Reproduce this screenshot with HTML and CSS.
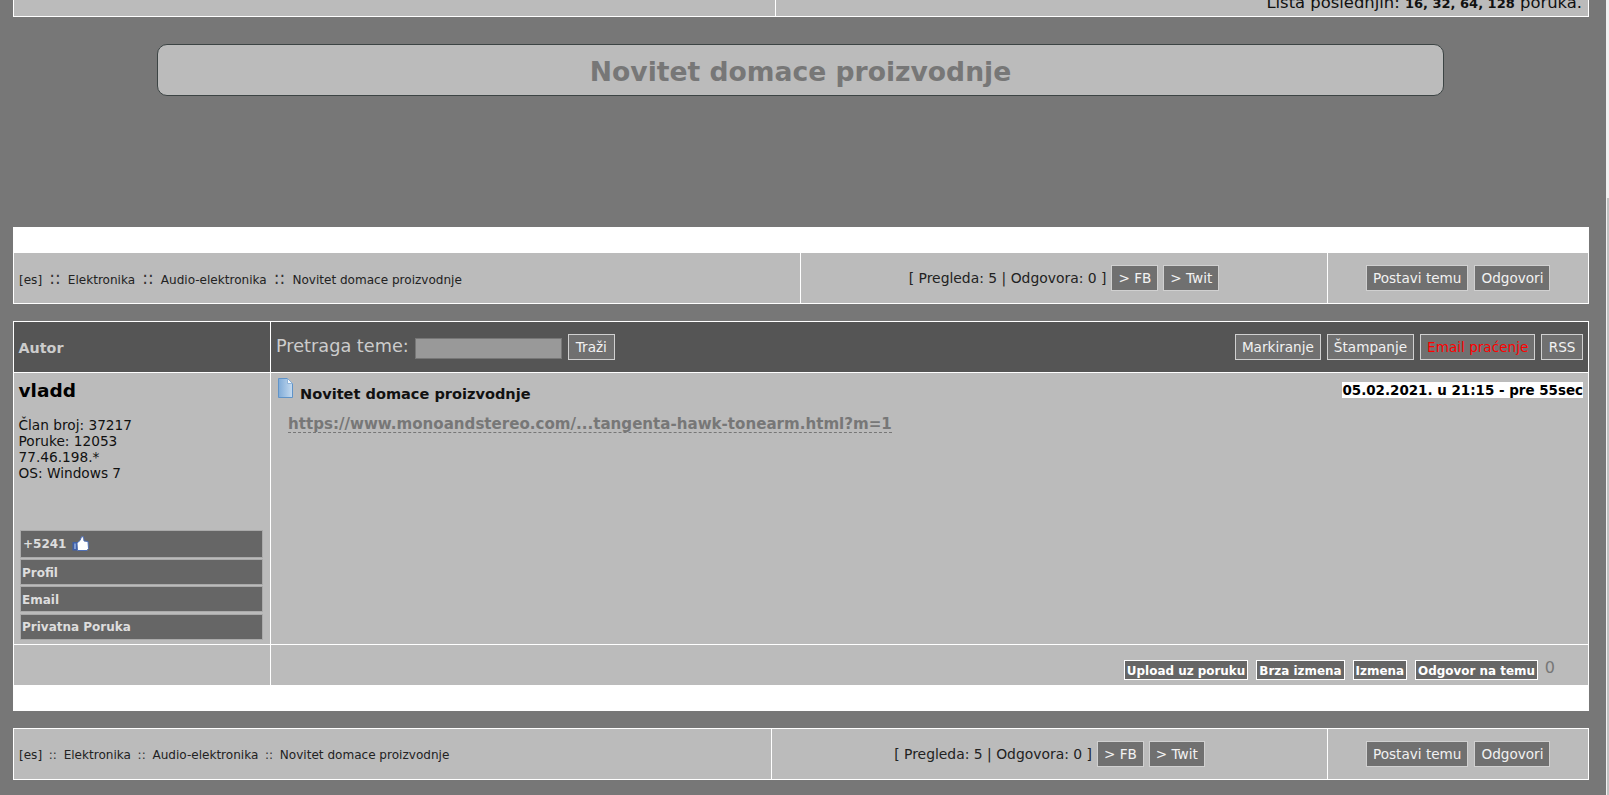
FILE: index.html
```html
<!DOCTYPE html>
<html lang="sr">
<head>
<meta charset="utf-8">
<title>Novitet domace proizvodnje</title>
<link rel="stylesheet" href="styles.css">
</head>
<body>
<div class="page">
  <div class="top-row">
    <div class="top-cell"></div>
    <div class="top-cell top-cell-right"><span>Lista poslednjih: <b class="mini">16, 32, 64, 128</b> poruka.</span></div>
  </div>

  <h1 class="title-box">Novitet domace proizvodnje</h1>

  <div class="band"></div>
  <div class="nav nav-first">
    <div class="nav-cell crumbs crumbs-big-sep">[es] <i>::</i> Elektronika <i>::</i> Audio-elektronika <i>::</i> Novitet domace proizvodnje</div>
    <div class="nav-cell nav-mid">
      <span class="stats">[ Pregleda: 5 | Odgovora: 0 ]</span>
      <a class="btn">&gt; FB</a><a class="btn">&gt; Twit</a>
    </div>
    <div class="nav-cell nav-actions"><a class="btn">Postavi temu</a><a class="btn">Odgovori</a></div>
  </div>

  <div class="thread">
    <div class="head-author">Autor</div>
    <div class="head-main">
      <span class="search-label">Pretraga teme:</span>
      <span class="search-input"></span>
      <a class="btn btn-search">Traži</a>
      <div class="head-tools">
        <a class="btn">Markiranje</a><a class="btn">Štampanje</a><a class="btn btn-red">Email praćenje</a><a class="btn btn-rss">RSS</a>
      </div>
    </div>

    <div class="author">
      <div class="author-name">vladd</div>
      <div class="author-info">Član broj: 37217<br>Poruke: 12053<br>77.46.198.*<br>OS: Windows 7</div>
      <div class="author-links">
        <a class="side-btn side-rep">+5241
          <svg class="thumb" width="17" height="15" viewBox="0 0 17 15"><path d="M0.5 6 H5 V14.5 H0.5 Z" fill="#3f5fa8"/><path d="M5 7 L8 4.5 L9.5 0.8 L11.5 0.8 L12 5 L16 5.5 L16.5 12.5 L15 14.5 L5.5 14.5 Z" fill="#fff" stroke="#4f6fb5" stroke-width="1"/><path d="M2 7.5 H4 V13 H2 Z" fill="#7f9bd0"/></svg>
        </a>
        <a class="side-btn side-text">Profil</a>
        <a class="side-btn side-text">Email</a>
        <a class="side-btn side-last">Privatna Poruka</a>
      </div>
    </div>

    <div class="post">
      <div class="post-head">
        <svg class="doc" width="15" height="20" viewBox="0 0 15 20"><defs><linearGradient id="docfill" x1="0" y1="0" x2="1" y2="0"><stop offset="0" stop-color="#7fabd8"/><stop offset="1" stop-color="#c6dbf0"/></linearGradient></defs><path d="M0.5 0.5 H9.5 L14.5 5.5 V19.5 H0.5 Z" fill="url(#docfill)" stroke="#5f93c8"/><path d="M9.5 0.5 V5.5 H14.5 Z" fill="#f2f7fc" stroke="#7fa8d2" stroke-width="0.8"/></svg>
        <span class="post-title">Novitet domace proizvodnje</span>
        <span class="post-date">05.02.2021. u 21:15 - pre 55sec</span>
      </div>
      <a class="post-link">https://www.monoandstereo.com/...tangenta-hawk-tonearm.html?m=1</a>
    </div>

    <div class="foot-left"></div>
    <div class="foot-main">
      <a class="act">Upload uz poruku</a><a class="act">Brza izmena</a><a class="act">Izmena</a><a class="act">Odgovor na temu</a><span class="count">0</span>
    </div>
  </div>

  <div class="band"></div>

  <div class="nav nav-last">
    <div class="nav-cell crumbs crumbs-small-sep">[es] <i>::</i> Elektronika <i>::</i> Audio-elektronika <i>::</i> Novitet domace proizvodnje</div>
    <div class="nav-cell nav-mid">
      <span class="stats">[ Pregleda: 5 | Odgovora: 0 ]</span>
      <a class="btn">&gt; FB</a><a class="btn">&gt; Twit</a>
    </div>
    <div class="nav-cell nav-actions"><a class="btn">Postavi temu</a><a class="btn">Odgovori</a></div>
  </div>
</div>
<div class="scroll-track"><div class="scroll-thumb"></div></div>
</body>
</html>
```

FILE: styles.css
```css
* { box-sizing: border-box; }
html, body { margin: 0; height: 795px; overflow: hidden; }
body {
  background: #777;
  color: #000;
  font-family: "DejaVu Sans", Verdana, sans-serif;
  font-size: 13px;
}
.page { padding: 0 20px 0 13px; height: 795px; overflow: hidden; }

.top-row {
  display: grid;
  grid-template-columns: 761px 1fr;
  height: 17px;
  background: #fff;
  padding: 0 1px 1px 1px;
  gap: 1px;
}
.top-cell { background: #bbb; overflow: hidden; display: flex; justify-content: flex-end; align-items: flex-end; }
.top-cell-right { padding-right: 6px; font-size: 16.4px; line-height: 16px; color: #111; }
.top-cell-right span { margin-bottom: 4px; white-space: nowrap; }
.mini { font-size: 13px; }

.title-box {
  margin: 27px 145px 131px 144px;
  height: 52px;
  background: #bbb;
  border: 1px solid #3c4444;
  border-radius: 10px;
  color: #777;
  font-size: 26.6px;
  line-height: 54px;
  font-weight: bold;
  text-align: center;
}

.band { height: 26px; background: #fff; }

.nav {
  display: grid;
  background: #fff;
  padding: 0 1px 1px 1px;
  gap: 1px;
}
.nav-first { grid-template-columns: 786px 526px 1fr; grid-template-rows: 50px; height: 51px; }
.nav-last { grid-template-columns: 757px 555px 1fr; grid-template-rows: 50px; padding-top: 1px; height: 52px; margin-top: 17px; }
.nav-cell { background: #bbb; display: flex; align-items: center; }
.crumbs { display: block; padding: 0 0 0 5px; font-size: 12.05px; color: #222; white-space: pre-wrap; }
.crumbs i { font-style: normal; line-height: 1; color: #333; }
.crumbs-big-sep { padding-top: 5px; line-height: 45px; }
.crumbs-big-sep i { font-size: 17px; margin: 0 3.3px; }
.crumbs-small-sep { padding-top: 2px; line-height: 48px; }
.crumbs-small-sep i { font-size: 12px; margin: 0 2.9px; }
.nav-mid { justify-content: center; gap: 5px; }
.stats { font-size: 13.9px; color: #222; white-space: nowrap; }
.nav-actions { padding-left: 38px; gap: 6px; }

.btn {
  display: inline-flex;
  align-items: center;
  height: 26px;
  padding: 0 6px;
  background: #707070;
  border: 1px solid #d0d0d0;
  color: #f2f2f2;
  font-size: 13.6px;
  white-space: nowrap;
}
.btn-red { color: #f00; }
.btn-rss { padding: 0 6.5px; }

.thread {
  margin-top: 17px;
  display: grid;
  grid-template-columns: 256px 1fr;
  grid-template-rows: 50px 271px 40px;
  gap: 1px;
  padding: 1px 1px 0 1px;
  background: #fff;
  height: 364px;
}
.head-author {
  background: #555;
  color: #ccc;
  font-weight: bold;
  font-size: 14.3px;
  padding: 17px 0 0 4.5px;
  line-height: 18px;
}
.head-main {
  background: #555;
  display: flex;
  align-items: center;
  padding: 0 5px;
}
.search-label { color: #ccc; font-size: 17.7px; margin-right: 6px; margin-top: -3px; white-space: nowrap; }
.search-input { width: 147px; height: 21px; background: #999; border: 1px solid #777; margin-top: 3px; }
.btn-search { margin-left: 6px; padding: 0 7px; }
.head-tools { margin-left: auto; display: flex; gap: 6px; }

.author { background: #bbb; padding: 0 7px 4px 4.5px; display: flex; flex-direction: column; }
.author-name { font-size: 18.5px; font-weight: bold; line-height: 22px; margin-top: 7px; }
.author-info { font-size: 13.7px; line-height: 16px; margin-top: 15px; color: #111; }
.author-links { margin-top: auto; display: flex; flex-direction: column; gap: 1px; padding-left: 1.5px; }
.side-btn {
  display: flex;
  align-items: center;
  height: 26px;
  background: #666;
  border: 1px solid #aaa;
  color: #ddd;
  font-size: 12px;
  font-weight: bold;
  padding: 0 1px;
}
.side-text { padding-top: 1px; }
.side-rep { height: 28px; padding-left: 2px; gap: 6px; }
.side-last { margin-top: 1px; }
.thumb { margin-bottom: 1px; }

.post { background: #bbb; padding: 5px 5px 0 7px; }
.post-head { display: flex; align-items: flex-start; height: 20px; }
.doc { flex: none; }
.post-title { font-size: 14.55px; font-weight: bold; line-height: 18px; margin: 7px 0 0 7px; color: #111; }
.post-date { margin-left: auto; margin-top: 4px; height: 16px; background: #fff; font-size: 13.45px; font-weight: bold; line-height: 17px; white-space: nowrap; }
.post-link {
  display: inline-block;
  margin: 18px 0 0 10px;
  color: #777;
  font-size: 15.08px;
  font-weight: bold;
  line-height: 16px;
  border-bottom: 1px dashed #777;
}

.foot-left { background: #bbb; }
.foot-main { background: #bbb; display: flex; justify-content: flex-end; align-items: flex-start; padding: 15px 42px 0 0; position: relative; }
.act {
  display: flex;
  align-items: center;
  height: 20px;
  padding: 1px 2px 0;
  margin-right: 8px;
  background: #666;
  border: 1px solid #fff;
  color: #fff;
  font-size: 11.95px;
  font-weight: bold;
  white-space: nowrap;
}
.count { color: #777; font-size: 16px; line-height: 18px; position: absolute; right: 33px; top: 14px; }

.scroll-track { position: absolute; top: 0; right: 0; bottom: 0; width: 3px; background: #f1f1f1; }
.scroll-thumb { position: absolute; top: 198px; left: 1px; right: 0; bottom: 0; background: #c1c1c1; }
```
